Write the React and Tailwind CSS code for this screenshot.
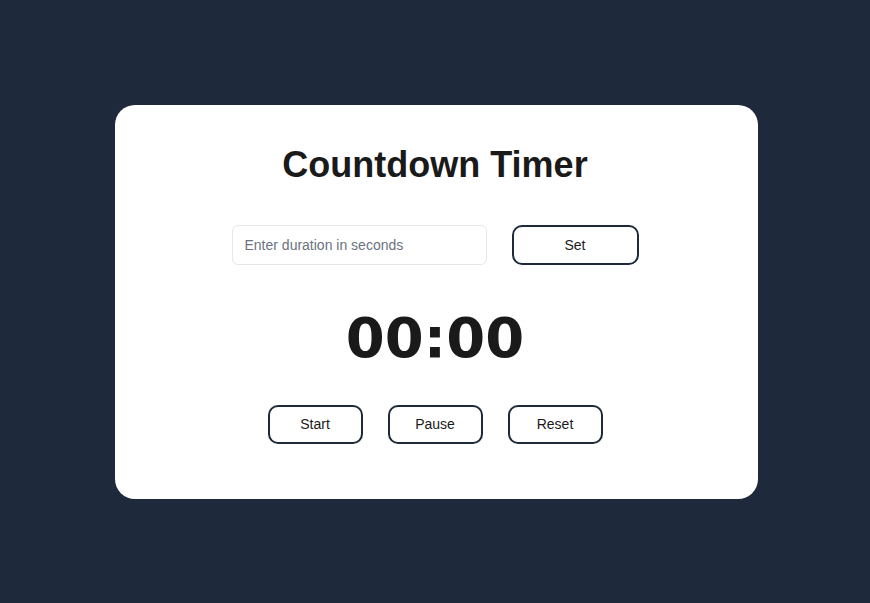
import React, { useEffect, useRef, useState } from "react";

const fmt = (s) => {
  const m = Math.floor(s / 60);
  const sec = s % 60;
  return `${String(m).padStart(2, "0")}:${String(sec).padStart(2, "0")}`;
};

const App = () => {
  const [input, setInput] = useState("");
  const [duration, setDuration] = useState(0);
  const [left, setLeft] = useState(0);
  const [running, setRunning] = useState(false);
  const timer = useRef(null);

  useEffect(() => {
    if (!running) return;
    timer.current = setInterval(() => {
      setLeft((l) => {
        if (l <= 1) {
          setRunning(false);
          return 0;
        }
        return l - 1;
      });
    }, 1000);
    return () => clearInterval(timer.current);
  }, [running]);

  const handleSet = () => {
    const n = parseInt(input, 10);
    if (!isNaN(n) && n > 0) {
      setDuration(n);
      setLeft(n);
      setRunning(false);
    }
  };

  const btn =
    "h-[39px] border-2 border-[#1e293b] rounded-[10px] bg-white text-[14px] text-[#1a1a1a] hover:bg-gray-50";

  return (
    <div
      className="min-h-screen bg-[#1e293b] flex items-center justify-center pl-[2px] pt-[1px]"
      style={{ fontFamily: '"Liberation Sans", Arial, sans-serif' }}
    >
      <div className="w-[643px] bg-white rounded-[20px] pt-[40px] pb-[55px] pr-[2px] flex flex-col items-center">
        <h1 className="text-[36px] leading-[40px] font-bold text-[#1a1a1a]">
          Countdown Timer
        </h1>

        {/* Input row */}
        <div className="mt-[40px] flex items-center gap-[25px]">
          <input
            value={input}
            onChange={(e) => setInput(e.target.value)}
            placeholder="Enter duration in seconds"
            className="w-[255px] h-[40px] px-[12px] border border-[#e5e7eb] rounded-[6px] text-[14px] text-[#1a1a1a] placeholder:text-[#6b7280] outline-none"
          />
          <button onClick={handleSet} className={`w-[127px] ${btn} h-[40px]`}>
            Set
          </button>
        </div>

        <div className="mt-[37px] text-[56px] leading-[72px] font-bold text-[#1a1a1a] font-['DejaVu_Sans',Verdana,sans-serif]">
          {fmt(left)}
        </div>

        <div className="mt-[31px] flex gap-[25px]">
          <button onClick={() => left > 0 && setRunning(true)} className={`w-[95px] ${btn}`}>
            Start
          </button>
          <button onClick={() => setRunning(false)} className={`w-[95px] ${btn}`}>
            Pause
          </button>
          <button
            onClick={() => {
              setRunning(false);
              setLeft(duration);
            }}
            className={`w-[95px] ${btn}`}
          >
            Reset
          </button>
        </div>
      </div>
    </div>
  );
};

export default App;
